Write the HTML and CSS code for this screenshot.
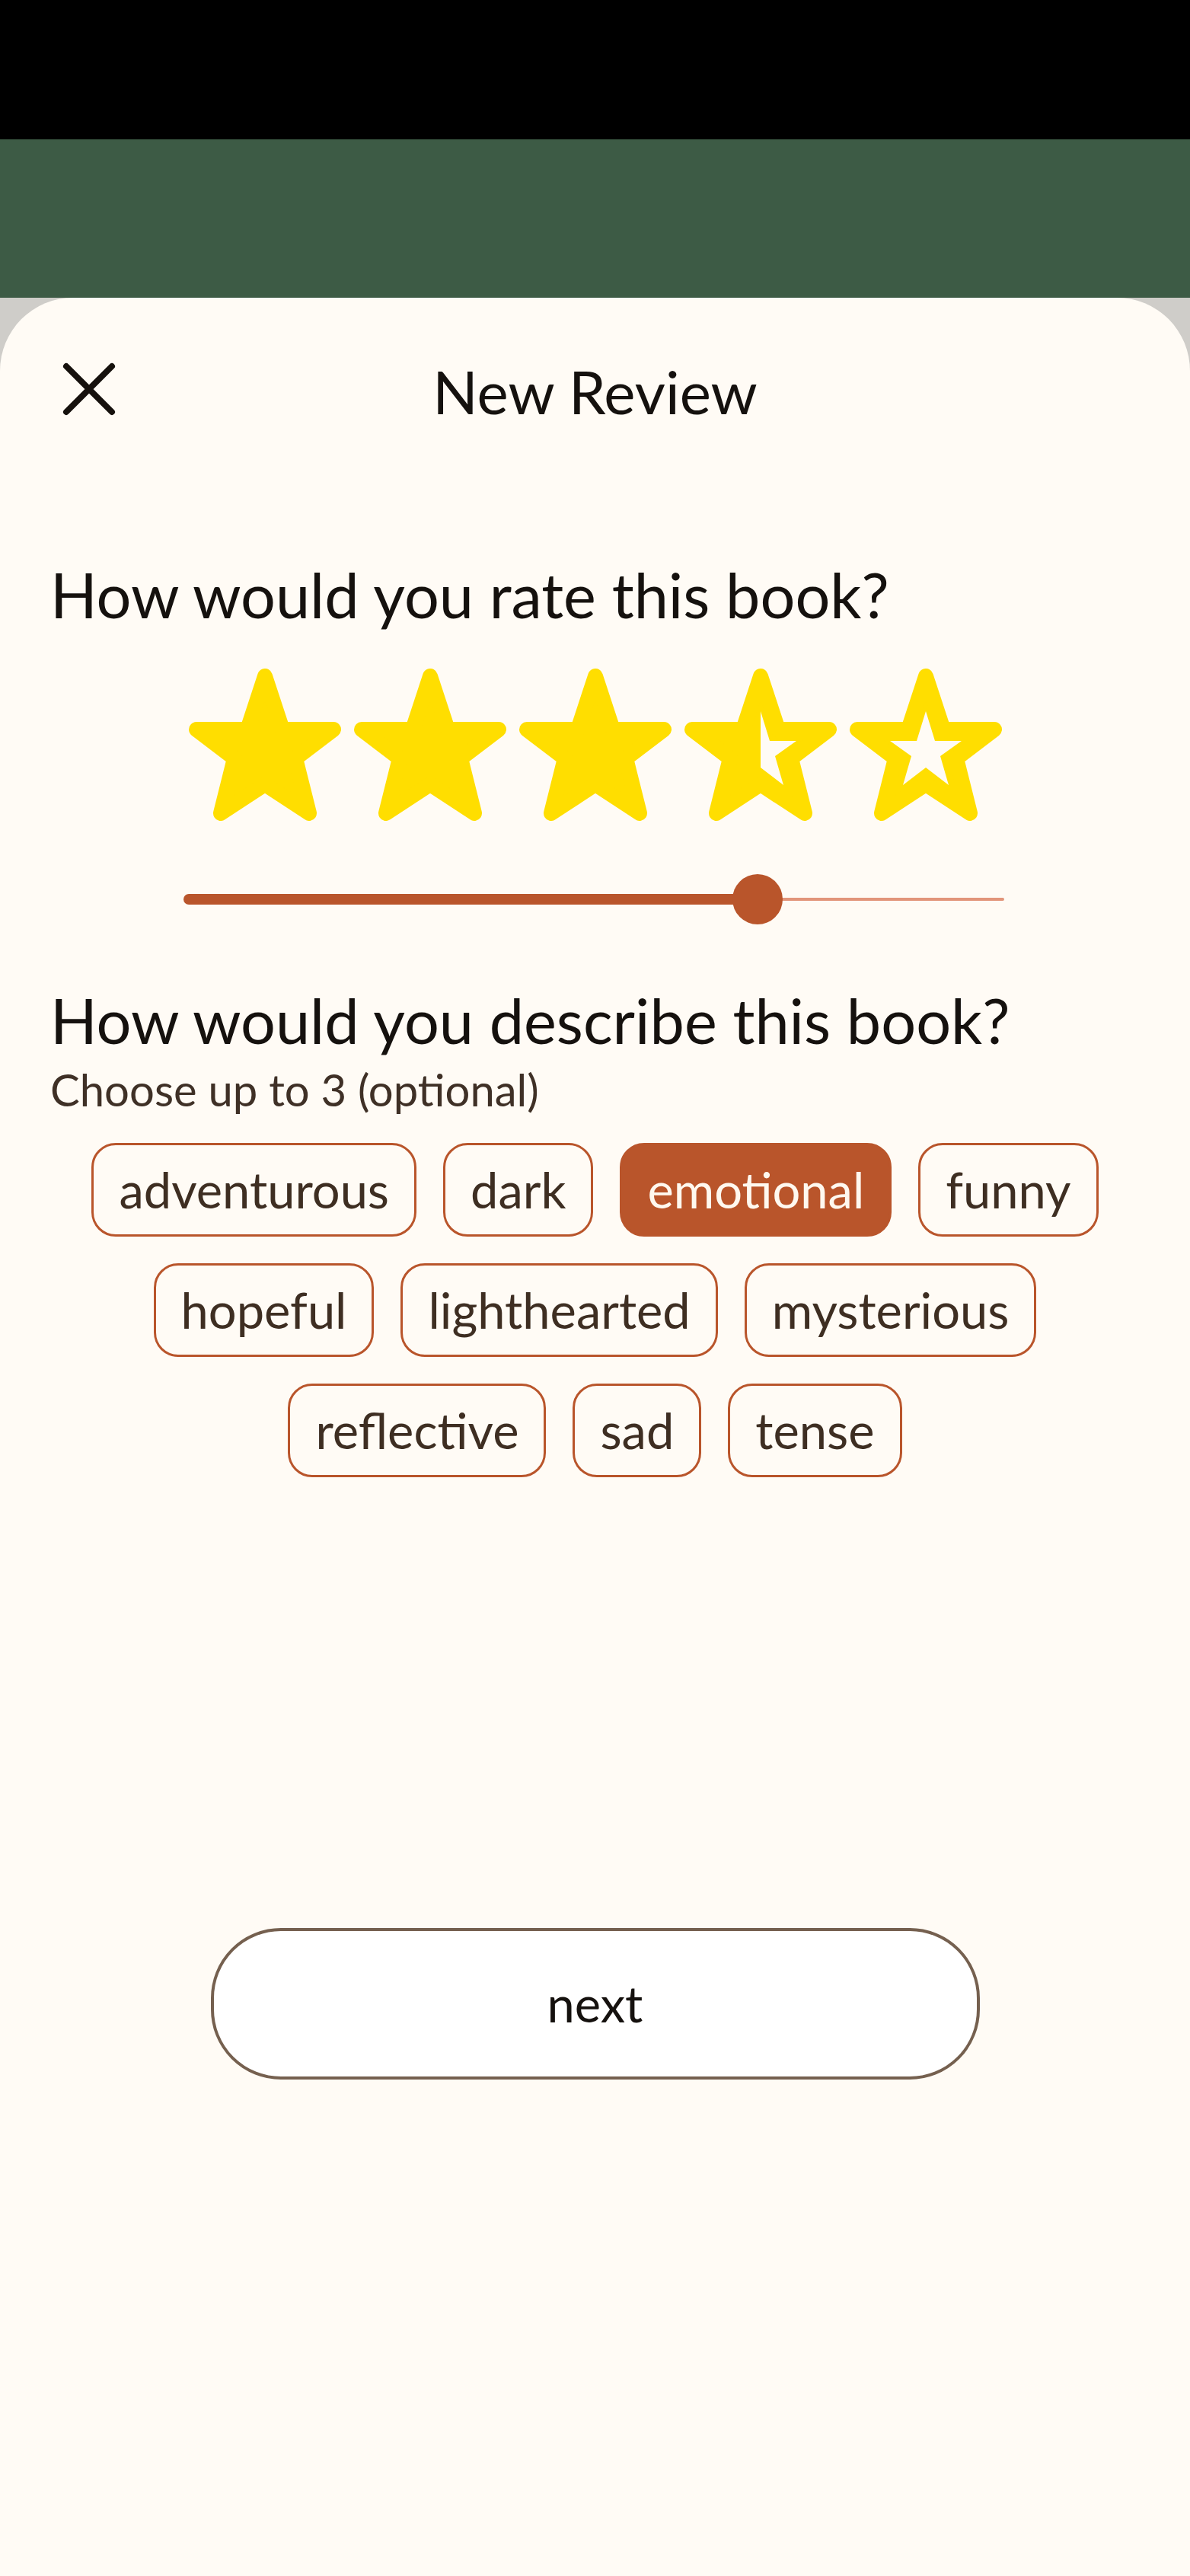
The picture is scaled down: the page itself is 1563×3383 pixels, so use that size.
FILE: index.html
```html
<!DOCTYPE html>
<html lang="en">
<head>
  <meta charset="UTF-8" />
  <meta name="viewport" content="width=device-width, initial-scale=1.0" />
  <title>New Review</title>
  <link rel="stylesheet" href="styles.css">
</head>
<body>
  <div class="status-bar"></div>
  <div class="backdrop"></div>

  <main class="sheet">
    <header class="sheet-header">
      <button class="close" aria-label="Close">
        <svg width="80" height="80" viewBox="0 0 80 80">
          <path d="M10 10 L70 70 M70 10 L10 70" stroke="#16110d" stroke-width="8" stroke-linecap="round" fill="none"/>
        </svg>
      </button>
      <h1>New Review</h1>
      <span></span>
    </header>

    <h2 class="question">How would you rate this book?</h2>

    <div class="stars">
      <svg class="star" viewBox="0 0 200 200"><polygon class="star-shape" points="100,10 77,80 10,80 60,118 42,190 100,152 158,190 140,118 190,80 123,80"/></svg>
      <svg class="star" viewBox="0 0 200 200"><polygon class="star-shape" points="100,10 77,80 10,80 60,118 42,190 100,152 158,190 140,118 190,80 123,80"/></svg>
      <svg class="star" viewBox="0 0 200 200"><polygon class="star-shape" points="100,10 77,80 10,80 60,118 42,190 100,152 158,190 140,118 190,80 123,80"/></svg>
      <svg class="star" viewBox="0 0 200 200">
        <polygon class="star-shape" points="100,10 77,80 10,80 60,118 42,190 100,152 158,190 140,118 190,80 123,80"/>
        <polygon class="star-hole" points="100,56 112,95 147,95 119,115 130,153 100,130"/>
      </svg>
      <svg class="star" viewBox="0 0 200 200">
        <polygon class="star-shape" points="100,10 77,80 10,80 60,118 42,190 100,152 158,190 140,118 190,80 123,80"/>
        <polygon class="star-hole" points="100,56 112,95 147,95 119,115 130,153 100,130 70,153 81,115 53,95 88,95"/>
      </svg>
    </div>

    <div class="slider">
      <div class="slider-fill" style="width: 70%"></div>
      <div class="slider-rest"></div>
      <div class="slider-thumb" style="left: calc(70% - 33px)"></div>
    </div>

    <h2 class="question second">How would you describe this book?</h2>
    <p class="hint">Choose up to 3 (optional)</p>

    <div class="tags">
      <span class="tag">adventurous</span>
      <span class="tag">dark</span>
      <span class="tag selected">emotional</span>
      <span class="tag">funny</span>
      <span class="tag">hopeful</span>
      <span class="tag">lighthearted</span>
      <span class="tag">mysterious</span>
      <span class="tag">reflective</span>
      <span class="tag">sad</span>
      <span class="tag">tense</span>
    </div>

    <button class="next">next</button>
  </main>
</body>
</html>
```
FILE: styles.css
```css
body {
  margin: 0;
  background: #cfcdc9;
  font-family: Lato, "Noto Sans", sans-serif;
  color: #15110e;
}
.status-bar {
  height: 183px;
  background: #000;
}
.backdrop {
  height: 208px;
  background: #3d5b45;
}
.sheet {
  background: #fffbf5;
  border-radius: 96px 96px 0 0;
  min-height: 2992px;
  padding: 0 66px;
  box-sizing: border-box;
}
.sheet-header {
  height: 240px;
  display: grid;
  grid-template-columns: 1fr auto 1fr;
  align-items: center;
  margin: 0 -66px;
}
.close {
  background: none;
  border: none;
  padding: 0;
  margin-left: 77px;
  width: 80px;
  height: 80px;
  cursor: pointer;
}
.close svg {
  display: block;
}
.sheet-header h1 {
  margin: 0;
  font-size: 78px;
  font-weight: 400;
  line-height: 1.2;
  padding-top: 8px;
}
.question {
  margin: 101px 0 0;
  font-size: 81px;
  font-weight: 400;
  line-height: 1.2;
}
.question.second {
  margin-top: 77px;
}
.hint {
  margin: 8px 0 0;
  font-size: 58px;
  line-height: 1.2;
  color: #3f3026;
}
.stars {
  display: flex;
  justify-content: center;
  gap: 17px;
  margin-top: 49px;
}
.star {
  width: 200px;
  height: 200px;
  display: block;
}
.star-shape {
  fill: #ffde00;
  stroke: #ffde00;
  stroke-width: 20;
  stroke-linejoin: round;
}
.star-hole {
  fill: #fffbf5;
}
.slider {
  position: relative;
  width: 1078px;
  height: 66px;
  margin: 70px auto 0;
  display: flex;
  align-items: center;
  left: -2px;
}
.slider-fill {
  height: 14px;
  background: #b9552b;
  border-radius: 7px 0 0 7px;
}
.slider-rest {
  flex: 1;
  height: 4px;
  background: #e2957a;
  border-radius: 0 2px 2px 0;
}
.slider-thumb {
  position: absolute;
  top: 0;
  width: 66px;
  height: 66px;
  border-radius: 50%;
  background: #b9552b;
}
.tags {
  display: flex;
  flex-wrap: wrap;
  justify-content: center;
  gap: 35px;
  margin-top: 35px;
}
.tag {
  box-sizing: border-box;
  height: 123px;
  display: inline-flex;
  align-items: center;
  padding: 0 33px;
  border: 3.5px solid #b9552b;
  border-radius: 32px;
  font-size: 65px;
  color: #3e2e22;
}
.tag.selected {
  background: #b9552b;
  color: #fff8ef;
}
.next {
  display: block;
  width: 1010px;
  height: 199px;
  margin: 592px auto 0;
  background: #fff;
  border: 4px solid #75604f;
  border-radius: 92px;
  font-family: Lato, "Noto Sans", sans-serif;
  font-size: 65px;
  color: #15110e;
  cursor: pointer;
}
```
